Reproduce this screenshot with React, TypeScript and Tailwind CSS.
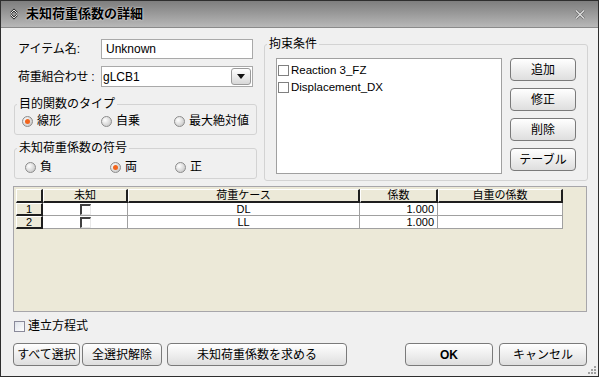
import React from "react";

const FONT = "font-[family-name:Liberation_Sans,Noto_Sans_CJK_JP,sans-serif]";

function Radio({ checked }: { checked?: boolean }) {
  return (
    <span className="inline-flex h-[11px] w-[11px] shrink-0 items-center justify-center rounded-full border border-[#8c8c8c] bg-[radial-gradient(circle_at_35%_35%,#ffffff,#bdbdbd)]">
      {checked && <span className="h-[5px] w-[5px] rounded-full bg-[#f2641c]" />}
    </span>
  );
}

function RadioItem({ label, checked, className }: { label: string; checked?: boolean; className?: string }) {
  return (
    <div className={`flex items-center gap-[4px] ${className ?? ""}`}>
      <Radio checked={checked} />
      <span className="text-[12px] leading-[14px] text-black">{label}</span>
    </div>
  );
}

function Btn({ children, className }: { children: React.ReactNode; className?: string }) {
  return (
    <button
      type="button"
      className={`flex h-[23px] items-center justify-center rounded-[4px] border border-[#7a7a7a] bg-gradient-to-b from-[#ffffff] to-[#dedede] text-[12px] text-black ${className ?? ""}`}
    >
      {children}
    </button>
  );
}

function GroupBox({ title, children, className }: { title: string; children: React.ReactNode; className?: string }) {
  return (
    <fieldset className={`rounded-[3px] border border-[#d3d3d3] ${className ?? ""}`}>
      <legend className="ml-[2px] px-[2px] text-[12px] leading-[16px] text-black">{title}</legend>
      {children}
    </fieldset>
  );
}

function ListCheck() {
  return <span className="h-[11px] w-[11px] shrink-0 border border-[#808080] bg-white" />;
}

function GridCheck() {
  return <span className="h-[11px] w-[11px] border-t-2 border-l-2 border-t-[#404040] border-l-[#404040] border-r border-b border-r-[#e8e8e8] border-b-[#e8e8e8] bg-white" />;
}

const cols = ["w-[27px]", "w-[85px]", "w-[232px]", "w-[78px]", "w-[125px]"];

function HeadCell({ w, children }: { w: string; children?: React.ReactNode }) {
  return (
    <div className={`${w} flex h-[14px] items-center justify-center border-t border-l border-t-white border-l-white border-r-2 border-b-2 border-r-[#1e1e1e] border-b-[#1e1e1e] bg-[#ece9d8] text-[11px] leading-none text-black`}>
      {children}
    </div>
  );
}

function RowHead({ n }: { n: number }) {
  return (
    <div className={`${cols[0]} flex h-[13px] items-center justify-center border-t border-l border-t-white border-l-white border-r-2 border-b-2 border-r-[#1e1e1e] border-b-[#1e1e1e] bg-[#ece9d8] text-[11px] leading-none text-black`}>
      {n}
    </div>
  );
}

function DataRow({ n, lc }: { n: number; lc: string }) {
  return (
    <div className="flex">
      <RowHead n={n} />
      <div className={`${cols[1]} flex h-[13px] items-center justify-center border-r border-b border-[#a0a0a0] bg-white`}>
        <GridCheck />
      </div>
      <div className={`${cols[2]} flex h-[13px] items-center justify-center border-r border-b border-[#a0a0a0] bg-white text-[11px] leading-none`}>
        {lc}
      </div>
      <div className={`${cols[3]} flex h-[13px] items-center justify-end border-r border-b border-[#a0a0a0] bg-white pr-[3px] text-[11px] leading-none`}>
        1.000
      </div>
      <div className={`${cols[4]} h-[13px] border-r border-b border-[#a0a0a0] bg-white`} />
    </div>
  );
}

export default function App() {
  return (
    <div className={`${FONT} relative flex h-[377px] w-[599px] flex-col border border-[#2e2e2e] bg-[#f0f0f0]`}>
      {/* Title bar */}
      <div className="flex h-[28px] items-center border-b border-[#8a8a8a] bg-gradient-to-b from-[#7e7e7e] to-[#b8b8b8] pl-[7px] pr-[12px]">
        <svg width="12" height="14" viewBox="0 0 12 14" className="mr-[6px]">
          <path d="M3 6 L6 3 L9 6" fill="none" stroke="#2a2a2a" strokeWidth="2.2" />
          <path d="M3 6 L6 3 L9 6" fill="none" stroke="#e8e8e8" strokeWidth="1" />
          <path d="M3 8 L6 11 L9 8" fill="none" stroke="#2a2a2a" strokeWidth="2.2" />
          <path d="M3 8 L6 11 L9 8" fill="none" stroke="#e8e8e8" strokeWidth="1" />
        </svg>
        <span className="text-[13px] font-bold text-black [text-shadow:0_0_2px_#ffffff]">未知荷重係数の詳細</span>
        <div className="flex-1" />
        <svg width="12" height="11" viewBox="0 0 12 11">
          <path d="M2 1.5 L10 9.5 M10 1.5 L2 9.5" stroke="#6a6a6a" strokeWidth="2.6" />
          <path d="M2 1.5 L10 9.5 M10 1.5 L2 9.5" stroke="#e0e0e0" strokeWidth="1.3" />
        </svg>
      </div>

      {/* Body */}
      <div className="flex flex-1 flex-col pl-[12px] pr-[11px] pt-[8px] pb-[10px]">
        <div className="flex gap-[7px]">
          {/* Left column */}
          <div className="ml-[1px] mt-[3px] flex w-[243px] flex-col">
            <div className="flex h-[20px] items-center">
              <span className="w-[87px] whitespace-nowrap pl-[4px] text-[12px] text-black">アイテム名:</span>
              <div className="flex h-[20px] w-[152px] items-center border border-[#a9a9a9] bg-white pl-[4px] text-[12px] text-black">
                Unknown
              </div>
            </div>
            <div className="mt-[7px] flex h-[21px] items-center">
              <span className="w-[87px] whitespace-nowrap pl-[4px] text-[12px] tracking-[-0.3px] text-black">荷重組合わせ :</span>
              <div className="flex h-[21px] w-[152px] items-center border border-[#a9a9a9] bg-white pl-[1px] pr-[1px] text-[12px] text-black">
                <span className="flex-1">gLCB1</span>
                <span className="flex h-[17px] w-[20px] items-center justify-center rounded-[3px] border border-[#9a9a9a] bg-gradient-to-b from-white to-[#d8d8d8]">
                  <svg width="8" height="6" viewBox="0 0 8 6">
                    <path d="M0 0 L8 0 L4 5 Z" fill="#111" />
                  </svg>
                </span>
              </div>
            </div>
            <GroupBox title="目的関数のタイプ" className="mt-[9px] h-[39px]">
              <div className="flex items-center pt-[2px]">
                <RadioItem label="線形" checked className="ml-[7px] w-[79px]" />
                <RadioItem label="自乗" className="w-[73px]" />
                <RadioItem label="最大絶対値" />
              </div>
            </GroupBox>
            <GroupBox title="未知荷重係数の符号" className="mt-[5px] h-[39px]">
              <div className="flex items-center pt-[4px]">
                <RadioItem label="負" className="ml-[10px] w-[85px]" />
                <RadioItem label="両" checked className="w-[65px]" />
                <RadioItem label="正" />
              </div>
            </GroupBox>
          </div>

          {/* Right column */}
          <GroupBox title="拘束条件" className="-mr-[1px] h-[145px] flex-1">
            <div className="flex gap-[8px] pl-[11px] pt-[6px]">
              <div className="flex h-[116px] w-[226px] flex-col border border-[#a0a0a0] bg-white pl-[1px] pt-[3px]">
                <div className="flex h-[17px] items-center gap-[2px] text-[11.5px] text-black">
                  <ListCheck />
                  Reaction 3_FZ
                </div>
                <div className="flex h-[17px] items-center gap-[2px] text-[11.5px] text-black">
                  <ListCheck />
                  Displacement_DX
                </div>
              </div>
              <div className="flex w-[66px] flex-col gap-[7px]">
                <Btn className="w-[66px]">追加</Btn>
                <Btn className="w-[66px]">修正</Btn>
                <Btn className="w-[66px]">削除</Btn>
                <Btn className="w-[66px]">テーブル</Btn>
              </div>
            </div>
          </GroupBox>
        </div>

        {/* Grid */}
        <div className="mt-[5px] h-[126px] border border-[#a7a6aa] bg-[#ece9d8] pl-[2px] pt-[2px]">
          <div className="flex">
            <HeadCell w={cols[0]} />
            <HeadCell w={cols[1]}>未知</HeadCell>
            <HeadCell w={cols[2]}>荷重ケース</HeadCell>
            <HeadCell w={cols[3]}>係数</HeadCell>
            <HeadCell w={cols[4]}>自重の係数</HeadCell>
          </div>
          <DataRow n={1} lc="DL" />
          <DataRow n={2} lc="LL" />
        </div>

        {/* Simultaneous equation checkbox */}
        <div className="mt-[8px] flex h-[12px] items-center gap-[3px] pl-[1px]">
          <span className="h-[11px] w-[11px] border border-[#8a8a9a] bg-gradient-to-br from-[#dfe3ea] to-white" />
          <span className="text-[12px] text-black">連立方程式</span>
        </div>

        {/* Bottom buttons */}
        <div className="mt-[11px] flex">
          <Btn className="w-[67px]">すべて選択</Btn>
          <Btn className="ml-[2px] w-[80px]">全選択解除</Btn>
          <Btn className="ml-[5px] w-[180px]">未知荷重係数を求める</Btn>
          <div className="flex-1" />
          <Btn className="w-[88px] font-bold">OK</Btn>
          <Btn className="ml-[6px] w-[88px]">キャンセル</Btn>
        </div>
      </div>

      {/* Resize grip */}
      <svg width="9" height="9" viewBox="0 0 9 9" className="absolute bottom-[1px] right-[1px]">
        <rect x="6" y="0" width="2" height="2" fill="#a0a0a0" />
        <rect x="3" y="3" width="2" height="2" fill="#a0a0a0" />
        <rect x="6" y="3" width="2" height="2" fill="#a0a0a0" />
        <rect x="0" y="6" width="2" height="2" fill="#a0a0a0" />
        <rect x="3" y="6" width="2" height="2" fill="#a0a0a0" />
        <rect x="6" y="6" width="2" height="2" fill="#a0a0a0" />
      </svg>
    </div>
  );
}
